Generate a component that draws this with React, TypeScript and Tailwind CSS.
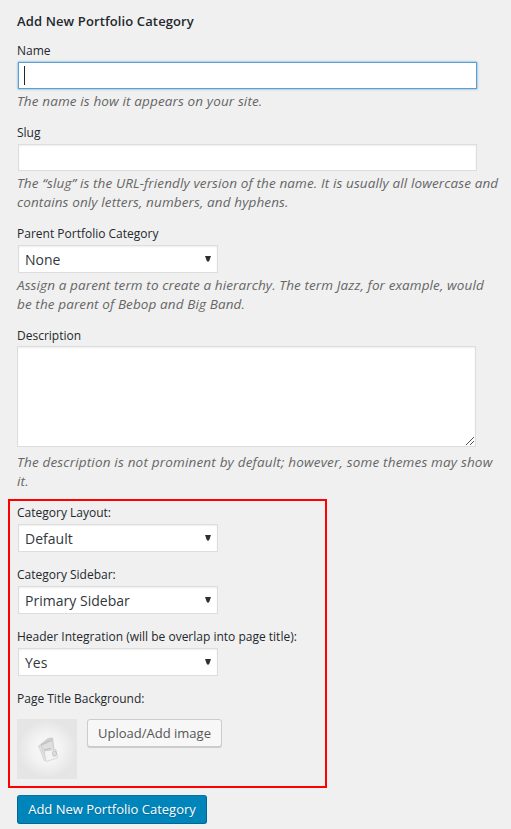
import type { ReactNode } from "react";

function Label({ children }: { children: ReactNode }) {
  return <label className="block h-[18px] pt-px whitespace-nowrap text-xs leading-[18px] text-[#23282d]">{children}</label>;
}

function Help({ lines, className }: { lines: string[]; className: string }) {
  return (
    <p className={`text-[13.5px] leading-[19px] text-[#666] italic ${className}`}>
      {lines.map((line) => (
        <span key={line} className="block whitespace-nowrap">{line}</span>
      ))}
    </p>
  );
}

function Select({ value }: { value: string }) {
  return (
    <div className="mt-[3px] ml-px flex h-7 w-[200px] items-center justify-between border border-[#ddd] bg-white pr-1.5 pl-1.5 text-sm text-[#32373c] shadow-[inset_0_1px_2px_rgba(0,0,0,0.07)]">
      <span className="pt-0.5 tracking-[0.02px]">{value}</span>
      <svg width="6" height="6" viewBox="0 0 6 6" className="mb-px">
        <path d="M0 0h6L4 5.5H2z" fill="#2c3036" />
      </svg>
    </div>
  );
}

function Thumbnail() {
  return (
    <svg width="60" height="60" viewBox="0 0 60 60">
      <defs>
        <radialGradient id="glow">
          <stop offset="0" stopColor="#fafafa" />
          <stop offset="0.5" stopColor="#f3f3f3" />
          <stop offset="1" stopColor="#e5e5e5" />
        </radialGradient>
      </defs>
      <rect width="60" height="60" fill="#e5e5e5" />
      <circle cx="30" cy="30" r="29" fill="url(#glow)" />
      <path d="M21 27l5-3 4 17-3 1z" fill="#d2d2d2" />
      <path d="M23 27l5 14M21.500 28l4 11" stroke="#ededed" strokeWidth=".8" fill="none" />
      <path d="M23.500 25L31 19l5-.5 1.500 12L26 33z" fill="#cecece" />
      <path d="M25 26.500l10-4.500 1.500 9-10 2z" fill="#dfdfdf" />
      <path d="M24 26l11-5" stroke="#bdbdbd" strokeWidth=".8" />
      <path d="M27 32l12-1.500 1.500 8.500L29 42.500z" fill="#f3f3f3" stroke="#d0d0d0" strokeWidth=".8" />
      <path d="M27 31l7-1.500" fill="none" stroke="#bbb" />
      <ellipse cx="37.500" cy="34.500" rx="2" ry="2.700" fill="#ddd" stroke="#bebebe" strokeWidth=".9" />
    </svg>
  );
}

export default function App() {
  return (
    <form className="flex h-[829px] w-[511px] flex-col overflow-hidden bg-[#f0f0f0] pt-3 font-['Open_Sans','Noto_Sans',sans-serif]">
      <div className="flex flex-col pl-[17px]">
        <h2 className="mb-[11px] h-[18px] text-[13px] leading-[18px] font-semibold tracking-[0.12px] whitespace-nowrap text-[#23282d]">Add New Portfolio Category</h2>
        <div className="flex flex-col gap-3">
          <div>
            <Label>Name</Label>
            <div className="mt-[3px] mb-[3px] ml-px flex h-[27px] w-[459px] items-center border border-[#5b9dd9] bg-white pl-[5px] shadow-[0_0_2px_rgba(30,140,190,0.8)]">
              <span className="h-[19px] w-px bg-[#23282d]" />
            </div>
            <Help className="tracking-[0.13px]" lines={["The name is how it appears on your site."]} />
          </div>
          <div>
            <Label>Slug</Label>
            <div className="mt-[3px] mb-[3px] ml-px h-[27px] w-[459px] border border-[#ddd] bg-white shadow-[inset_0_1px_2px_rgba(0,0,0,0.07)]" />
            <Help className="tracking-[0.12px]" lines={["The “slug” is the URL-friendly version of the name. It is usually all lowercase and", "contains only letters, numbers, and hyphens."]} />
          </div>
          <div>
            <Label>Parent Portfolio Category</Label>
            <Select value="None" />
            <div className="mt-[3px]">
              <Help className="tracking-[0.11px]" lines={["Assign a parent term to create a hierarchy. The term Jazz, for example, would", "be the parent of Bebop and Big Band."]} />
            </div>
          </div>
          <div>
            <Label>Description</Label>
            <div className="mt-0.5 mb-1.5 flex h-[101px] w-[459px] items-end justify-end border border-[#ddd] bg-white shadow-[inset_0_1px_2px_rgba(0,0,0,0.07)]">
              <svg width="9" height="9" viewBox="0 0 9 9" shapeRendering="crispEdges">
                <path d="M0 8L8 0M4 8l4-4" stroke="#555" fill="none" />
              </svg>
            </div>
            <Help className="tracking-[0.18px]" lines={["The description is not prominent by default; however, some themes may show", "it."]} />
          </div>
        </div>
      </div>
      <section className="mt-2 ml-2 flex h-[289px] w-[319px] shrink-0 flex-col border-2 border-[#f00] pt-0.5 pl-[7px]">
        <div className="flex flex-col gap-[13px]">
          <div>
            <Label>Category Layout:</Label>
            <Select value="Default" />
          </div>
          <div>
            <Label>Category Sidebar:</Label>
            <Select value="Primary Sidebar" />
          </div>
          <div>
            <Label>Header Integration (will be overlap into page title):</Label>
            <Select value="Yes" />
          </div>
          <Label>Page Title Background:</Label>
        </div>
        <div className="mt-3 flex items-start gap-2.5">
          <Thumbnail />
          <button type="button" className="h-7 w-[135px] rounded-[3px] border border-[#ccc] bg-[#f7f7f7] text-[13px] leading-[26px] whitespace-nowrap text-[#555] shadow-[0_1px_0_#ccc]">Upload/Add image</button>
        </div>
      </section>
      <button type="button" className="mt-[7px] ml-[17px] h-[29px] w-[190px] shrink-0 rounded-[3px] border border-[#006799] border-t-[#0073aa] bg-[#0085ba] text-[13px] leading-[27px] font-medium whitespace-nowrap text-white [text-shadow:0_1px_1px_#006799]">Add New Portfolio Category</button>
    </form>
  );
}
